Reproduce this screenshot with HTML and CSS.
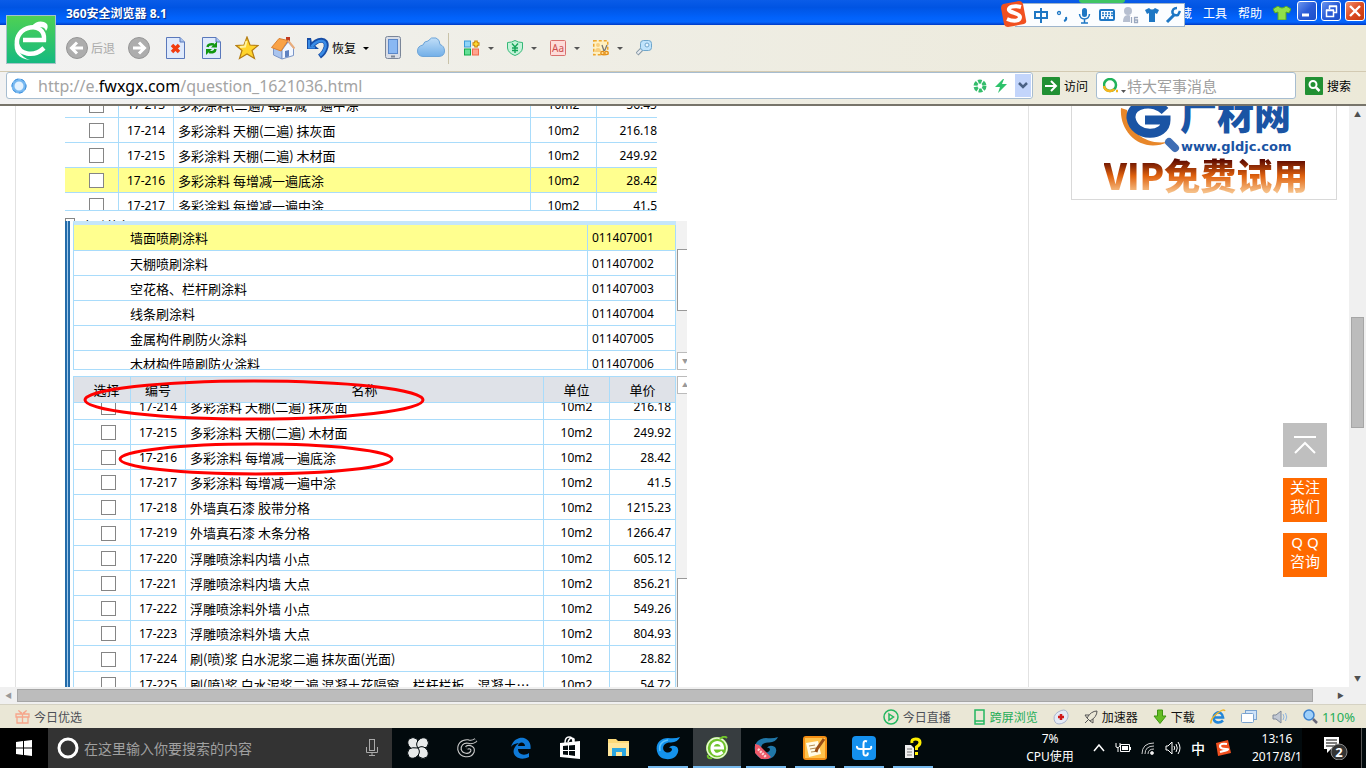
FILE: index.html
```html
<!DOCTYPE html>
<html lang="zh-CN">
<head>
<meta charset="utf-8">
<title>360安全浏览器 8.1</title>
<link rel="stylesheet" href="styles.css">
</head>
<body>
<header class="titlebar">
  <div class="app-logo">
    <svg width="50" height="50" viewBox="0 0 50 50"><defs><linearGradient id="lg" x1="0" y1="0" x2="0" y2="1"><stop offset="0" stop-color="#4fd153"/><stop offset="1" stop-color="#14b981"/></linearGradient></defs><rect x=".5" y=".5" width="49" height="48" fill="url(#lg)" stroke="#a5c4c8"/><path d="M17 25H38C39 15 31 11 24 12.500C15 14 10 22 11 29C13 39 27 43 38 33" fill="none" stroke="#fff" stroke-width="4.500"/><path d="M25 12C30 6 36 5 41 9C42 11 42 13 40 16C39 12 35 11 31 14ZM9 27C7 36 12 44 24 45C14 42 12 35 12 27Z" fill="#fff"/></svg>
  </div>
  <h1 class="title">360安全浏览器 8.1</h1>
  <nav class="menu">
    <a href="#">收藏</a><a href="#">工具</a><a href="#">帮助</a>
    <svg width="18" height="14" viewBox="0 0 18 14"><path d="M0 3L5 0Q9 4 13 0L18 3L16 7L13 6V14H5V6L2 7Z" fill="#8fe04a" stroke="#54a827"/></svg>
  </nav>
  <div class="winbtns">
    <button aria-label="最小化"><svg width="18" height="18"><path d="M4 13H11" stroke="#fff" stroke-width="3"/></svg></button>
    <button aria-label="还原"><svg width="18" height="18" fill="none" stroke="#fff"><path d="M7.500 7V4.500H14.500V10.500H12M7 4H15M4.500 8.500H11.500V14.500H4.500ZM4 8H12" stroke-width="1.500"/></svg></button>
    <button class="close" aria-label="关闭"><svg width="18" height="18"><path d="M4 4L14 14M14 4L4 14" stroke="#fff" stroke-width="2.400"/></svg></button>
  </div>
  <div class="ime">
    <i class="ime-ball"></i>
    <svg class="sogou" width="28" height="28" viewBox="0 0 28 28"><path d="M3 4Q1 5 1 8L4 24Q5 27 8 27L24 24Q27 23 26 20L23 4Q22 1 19 1Z" fill="#f1501f"/><path d="M21 7C14 5 8 7 9 10S20 13 20 17S14 22 7 19" fill="none" stroke="#fff" stroke-width="4"/></svg>
    <svg width="150" height="20" viewBox="0 0 150 20" fill="none" stroke="#1e77c4" stroke-width="2"><path d="M1 7H13V13H1ZM7 3V18"/><circle cx="25" cy="8" r="1.500" stroke-width="1.300"/><path d="M32 12Q33 15 30 16"/><rect x="48" y="3" width="5" height="9" rx="2.500" fill="#1e77c4" stroke="none"/><path d="M45.500 9Q46 14 50.500 14T55.500 9M50.500 14V18M47 18H54" stroke-width="1.500"/><rect x="66" y="5" width="14" height="10" rx="1"/><path d="M68 8H79M68 10.500H79M70 13H76" stroke-dasharray="2 1" stroke-width="1.300"/><g fill="#b6bfd0" stroke="none"><circle cx="94" cy="6" r="4"/><path d="M89 17Q89 10 94 10T100 17Z"/></g><path d="M97.500 11V18M104 12.500H100V17.500H104V15H100" stroke="#fff" stroke-width="3"/><path d="M97.500 12V18M104 12.500H100.500V17.500H103.500V15H101" stroke="#9aa8bf" stroke-width="1.300"/><path d="M111 5L115 3Q118 6 121 3L125 5L123 9L121 8V17H115V8L113 9Z" fill="#1e77c4" stroke="none"/><path d="M133 17L140 10" stroke-width="3"/><path d="M143 3Q138 3 138.500 8Q140 11 144 10L146 6" stroke-width="2.500"/></svg>
  </div>
</header>

<div class="toolbar">
  <button class="tool muted"><svg width="24" height="24"><circle cx="12" cy="12" r="10.500" fill="#adadad" stroke="#969696"/><path d="M18 12H7M12 6.500L6.500 12L12 17.500" fill="none" stroke="#fff" stroke-width="3"/></svg>后退</button>
  <button class="tool" aria-label="前进"><svg width="24" height="24"><circle cx="12" cy="12" r="10.500" fill="#adadad" stroke="#969696"/><path d="M6 12H17M12 6.500L17.500 12L12 17.500" fill="none" stroke="#fff" stroke-width="3"/></svg></button>
  <button class="tool" aria-label="停止"><svg width="24" height="24"><path d="M3.500 1.500H17L21.500 6V22.500H3.500Z" fill="#dfeafc" stroke="#5a78bb"/><path d="M17 1.500V6H21.500" fill="#aac4ee" stroke="#5a78bb"/><path d="M9 9L16 16M16 9L9 16" stroke="#f13c11" stroke-width="3.500"/></svg></button>
  <button class="tool" aria-label="刷新"><svg width="24" height="24"><path d="M3.500 1.500H17L21.500 6V22.500H3.500Z" fill="#dfeafc" stroke="#5a78bb"/><path d="M17 1.500V6H21.500" fill="#aac4ee" stroke="#5a78bb"/><path d="M8.500 11Q9 7.500 15 8.500M16.500 13Q16 17 10 16" fill="none" stroke="#11960f" stroke-width="2.500"/><path d="M18 5.500V11.500H12ZM7 19V13H13Z" fill="#11960f"/></svg></button>
  <button class="tool" aria-label="收藏"><svg width="24" height="24"><path d="M12 1L15 9L23 9.500L17 14.500L19.500 22.500L12 18L4.500 22.500L7 14.500L1 9.500L9 9Z" fill="#ffd42c" stroke="#b47c12" stroke-width="1.200"/><path d="M11.500 5L10 10.500L5 11" stroke="#fff3a0" stroke-width="2" fill="none"/></svg></button>
  <button class="tool" aria-label="主页"><svg width="24" height="24"><path d="M15 1H19V8H15Z" fill="#c23a20"/><path d="M2.500 10L11 14V23L2.500 19Z" fill="#a9c4ee" stroke="#7b96c8"/><path d="M11 14L17 6L22.500 12V19.500L11 23Z" fill="#f2f7ff" stroke="#7b96c8"/><path d="M.5 11.500L8 2.500L17 4.500L10 15Z" fill="#f9a246" stroke="#d98030"/><path d="M17 4.500L23.500 12.500" stroke="#e9ad7c" stroke-width="2"/><path d="M14 15L18 14V20.500L14 21.500Z" fill="#5f82c0"/></svg></button>
  <button class="tool undo"><svg width="24" height="24"><path d="M4 11C10 2 21 2 19 11Q17.500 17 12.500 20.500" fill="none" stroke="#174da5" stroke-width="5"/><path d="M0 2L4 2L5 7L12 13L0 13Z" fill="#174da5"/><path d="M4.500 10.500C11 3 20 3 18.500 11Q17 16.500 13 19.500" fill="none" stroke="#3a8ce6" stroke-width="2.500"/><path d="M2 4V11.500H8" fill="none" stroke="#3a8ce6" stroke-width="2"/></svg><span>恢复</span><i class="caret dark"></i></button>
  <button class="tool" aria-label="手机"><svg width="24" height="24"><rect x="4.500" y=".5" width="15" height="22" rx="2" fill="#d9dde6" stroke="#7b8699"/><rect x="7.500" y="3.500" width="9" height="14" fill="#8ab8f3" stroke="#5b87c8"/><path d="M10 20.500H14" stroke="#7d8796" stroke-width="2"/></svg></button>
  <button class="tool" aria-label="云"><svg width="28" height="24"><defs><linearGradient id="cl" x1="0" y1="0" x2="0" y2="1"><stop offset="0" stop-color="#c2dff8"/><stop offset="1" stop-color="#72afe8"/></linearGradient></defs><path d="M6 20.500Q.5 20 .5 15T6 9Q7 5 11 5Q14 .5 19 2Q23 3.500 23 8.500Q27.500 10 27.500 15T22 20.500Z" fill="url(#cl)" stroke="#6ea5d8"/></svg></button>
  <i class="sep"></i>
  <button class="tool small" aria-label="应用"><svg width="16" height="16"><rect x=".5" y="1" width="6" height="6" fill="#8fd4f8" stroke="#3a9ad9"/><rect x=".5" y="9" width="6" height="6" fill="#65df96" stroke="#11a94b"/><rect x="8.500" y="9" width="6" height="6" fill="#ffa48f" stroke="#f06a4d"/><path d="M12 .5V7.500M8.500 4H15.500" stroke="#c98300" stroke-width="3.500"/><path d="M12 1.500V6.500M9.500 4H14.500" stroke="#ffdd36" stroke-width="1.500"/></svg><i class="caret"></i></button>
  <button class="tool small" aria-label="网银"><svg width="16" height="16" fill="none" stroke="#35b877"><path d="M8 .5Q11 2.500 15.500 2.500V8Q15 13 8 15.500Q1 13 .5 8V2.500Q5 2.500 8 .5Z" fill="#c4f3d9"/><path d="M5 3.500L8 7L11 3.500M8 7V13M5 8H11M5 10.500H11" stroke="#13a558" stroke-width="1.400"/></svg><i class="caret"></i></button>
  <button class="tool small"><svg width="16" height="16"><rect x=".5" y=".5" width="15" height="15" rx="1" fill="#fddcd9" stroke="#d9706d"/><text x="2" y="12" font-size="10" fill="#cc4e4e">Aa</text></svg><i class="caret"></i></button>
  <button class="tool small" aria-label="截图"><svg width="16" height="16"><rect x=".75" y=".75" width="14" height="14" fill="#fff0c0" stroke="#eda62d" stroke-width="1.500" stroke-dasharray="3 2"/><circle cx="5" cy="5" r="2" fill="#f8cf80"/><path d="M2 12Q2 8 5 8T8 12Z" fill="#f8cf80"/><path d="M9 5L11 11M14 5L11.500 11" stroke="#777" stroke-width="1.300"/><circle cx="9.500" cy="13" r="1.700" fill="#ffe0a0" stroke="#e38f18" stroke-width="1.300"/><circle cx="13.500" cy="13" r="1.700" fill="#ffe0a0" stroke="#e38f18" stroke-width="1.300"/></svg><i class="caret"></i></button>
  <button class="tool small" aria-label="登录管家"><svg width="16" height="16"><path d="M6 9L1 14" stroke="#8798a5" stroke-width="4"/><path d="M6 9L1.500 13.500" stroke="#e9edf0" stroke-width="2"/><rect x="4.500" y=".5" width="11" height="10" rx="3" fill="#bfe3fb" stroke="#6fa6cb"/><circle cx="11" cy="5" r="2" fill="#e9f6ff" stroke="#6fa6cb"/></svg></button>
</div>

<div class="addressbar">
  <div class="field url">
    <svg width="16" height="16"><circle cx="8" cy="8" r="6" fill="#e3f2ff" stroke="#77b8f0" stroke-width="3"/><circle cx="8" cy="8" r="7" fill="none" stroke="#3d8fdc" stroke-dasharray="4 3"/></svg>
    <div class="url-text" contenteditable="true" role="textbox" aria-label="地址" spellcheck="false">http://e.<b>fwxgx.com</b>/question_1621036.html</div>
    <svg width="14" height="14"><circle cx="7" cy="7" r="4.500" fill="none" stroke="#34bd6b" stroke-width="4" stroke-dasharray="3.500 1.200"/></svg>
    <svg width="14" height="14"><path d="M9 0L1 8H6L4 14L13 5H8L10 0Z" fill="#2dc26b"/></svg>
    <button class="drop" aria-label="展开"><svg width="10" height="8"><path d="M1 1L5 5L9 1" fill="none" stroke="#4a6184" stroke-width="2.500"/></svg></button>
  </div>
  <button class="go"><svg width="18" height="18"><rect width="18" height="18" rx="1" fill="#219033"/><path d="M3 9H14M9 4L14 9L9 14" fill="none" stroke="#fff" stroke-width="2"/></svg>访问</button>
  <div class="field search">
    <svg width="24" height="16"><circle cx="7" cy="7" r="6" fill="none" stroke="#21b25b" stroke-width="2.500"/><path d="M1 8Q2 13 7 13Q10 13 11 11M13 13H15" fill="none" stroke="#f7b51d" stroke-width="2.500"/><path d="M18 12H23L20.500 15Z" fill="#555"/></svg>
    <input type="text" placeholder="特大军事消息" aria-label="搜索">
  </div>
  <button class="go"><svg width="18" height="18"><rect width="18" height="18" rx="1" fill="#219033"/><circle cx="8" cy="7.500" r="3.500" fill="none" stroke="#fff" stroke-width="2"/><path d="M11 10.500L14.500 14" stroke="#fff" stroke-width="2.500"/></svg>搜索</button>
</div>

<div class="viewport">
  <main class="page">
    <article class="article">
      <div class="shot shot-a">
        <table class="grid">
          <colgroup><col class="a1"><col class="c2"><col class="c3"><col class="c4"><col class="a5"></colgroup>
          <tr><td><input type="checkbox" aria-label="17-213"></td><td>17-213</td><td>多彩涂料(二遍) 每增减一遍中涂</td><td>10m2</td><td>56.45</td></tr>
          <tr><td><input type="checkbox" aria-label="17-214"></td><td>17-214</td><td>多彩涂料 天棚(二遍) 抹灰面</td><td>10m2</td><td>216.18</td></tr>
          <tr><td><input type="checkbox" aria-label="17-215"></td><td>17-215</td><td>多彩涂料 天棚(二遍) 木材面</td><td>10m2</td><td>249.92</td></tr>
          <tr class="on"><td><input type="checkbox" aria-label="17-216"></td><td>17-216</td><td>多彩涂料 每增减一遍底涂</td><td>10m2</td><td>28.42</td></tr>
          <tr><td><input type="checkbox" aria-label="17-217"></td><td>17-217</td><td>多彩涂料 每增减一遍中涂</td><td>10m2</td><td>41.5</td></tr>
        </table>
      </div>
      <div class="wrapline"><label><input type="checkbox">自动换行</label></div>
      <div class="shot shot-b">
        <i class="rail"></i>
        <div class="panes">
          <div class="pane">
            <div class="clip list">
              <table class="grid">
                <colgroup><col><col class="code"></colgroup>
                <tr class="on"><td>墙面喷刷涂料</td><td>011407001</td></tr>
                <tr><td>天棚喷刷涂料</td><td>011407002</td></tr>
                <tr><td>空花格、栏杆刷涂料</td><td>011407003</td></tr>
                <tr><td>线条刷涂料</td><td>011407004</td></tr>
                <tr><td>金属构件刷防火涂料</td><td>011407005</td></tr>
                <tr><td>木材构件喷刷防火涂料</td><td>011407006</td></tr>
              </table>
            </div>
            <div class="minibar"><i class="thumb top"></i><i class="arrow">▼</i></div>
          </div>
          <div class="pane">
            <div class="clip">
              <table class="grid head">
                <colgroup><col class="b1"><col class="c2"><col class="c3"><col class="c4"><col class="c4"></colgroup>
                <tr><th>选择</th><th>编号</th><th>名称</th><th>单位</th><th>单价</th></tr>
              </table>
              <div class="rows">
              <table class="grid">
                <colgroup><col class="b1"><col class="c2"><col class="c3"><col class="c4"><col class="c4"></colgroup>
                <tr><td><input type="checkbox" aria-label="17-214"></td><td>17-214</td><td>多彩涂料 天棚(二遍) 抹灰面</td><td>10m2</td><td>216.18</td></tr>
                <tr><td><input type="checkbox" aria-label="17-215"></td><td>17-215</td><td>多彩涂料 天棚(二遍) 木材面</td><td>10m2</td><td>249.92</td></tr>
                <tr><td><input type="checkbox" aria-label="17-216"></td><td>17-216</td><td>多彩涂料 每增减一遍底涂</td><td>10m2</td><td>28.42</td></tr>
                <tr><td><input type="checkbox" aria-label="17-217"></td><td>17-217</td><td>多彩涂料 每增减一遍中涂</td><td>10m2</td><td>41.5</td></tr>
                <tr><td><input type="checkbox" aria-label="17-218"></td><td>17-218</td><td>外墙真石漆 胶带分格</td><td>10m2</td><td>1215.23</td></tr>
                <tr><td><input type="checkbox" aria-label="17-219"></td><td>17-219</td><td>外墙真石漆 木条分格</td><td>10m2</td><td>1266.47</td></tr>
                <tr><td><input type="checkbox" aria-label="17-220"></td><td>17-220</td><td>浮雕喷涂料内墙 小点</td><td>10m2</td><td>605.12</td></tr>
                <tr><td><input type="checkbox" aria-label="17-221"></td><td>17-221</td><td>浮雕喷涂料内墙 大点</td><td>10m2</td><td>856.21</td></tr>
                <tr><td><input type="checkbox" aria-label="17-222"></td><td>17-222</td><td>浮雕喷涂料外墙 小点</td><td>10m2</td><td>549.26</td></tr>
                <tr><td><input type="checkbox" aria-label="17-223"></td><td>17-223</td><td>浮雕喷涂料外墙 大点</td><td>10m2</td><td>804.93</td></tr>
                <tr><td><input type="checkbox" aria-label="17-224"></td><td>17-224</td><td>刷(喷)浆 白水泥浆二遍 抹灰面(光面)</td><td>10m2</td><td>28.82</td></tr>
                <tr><td><input type="checkbox" aria-label="17-225"></td><td>17-225</td><td>刷(喷)浆 白水泥浆二遍 混凝土花隔窗、栏杆栏板、混凝土…</td><td>10m2</td><td>54.72</td></tr>
              </table>
              </div>
            </div>
            <div class="minibar"><i class="arrow">▲</i><i class="thumb rest"></i></div>
          </div>
        </div>
        <svg class="marks" width="370" height="110" fill="none" stroke="#f00" stroke-width="3"><ellipse cx="189" cy="29" rx="169" ry="19"/><ellipse cx="191" cy="88" rx="136" ry="15"/></svg>
      </div>
    </article>
    <aside class="side">
      <a class="ad" href="#">
        <svg width="180" height="60" viewBox="0 0 180 60"><path d="M1 2C-1 27 22 48 48 36C25 39 10 27 7 4Z" fill="#e8872a"/><path d="M45 5C34-7 10-3 11 12C14 32 46 32 46 14H25" fill="none" stroke="#1a54a4" stroke-width="9"/><path d="M49 36L55 42" stroke="#3e6db4" stroke-width="8" stroke-linecap="round"/><text x="60" y="24" class="brand">广材网</text><text x="61" y="45" class="site">www.gldjc.com</text></svg>
        <strong>VIP免费试用</strong>
      </a>
    </aside>
    <div class="float">
      <button class="up" aria-label="返回顶部"><svg width="24" height="20" fill="none" stroke="#fff" stroke-width="2"><path d="M1 2H23M2 18L12 8L22 18"/></svg></button>
      <button>关注<br>我们</button>
      <button>Q Q<br>咨询</button>
    </div>
  </main>
  <div class="vscroll"><i class="tri">▲</i><i class="s1"></i><i class="bar"></i><i class="s2"></i><i class="tri">▼</i></div>
</div>
<div class="hscroll"><i class="tri pale">◀</i><i class="bar"></i><i class="s"></i><i class="tri">▶</i></div>

<footer class="status">
  <a href="#" class="gift"><svg width="15" height="14" fill="none" stroke="#f6a58a" stroke-width="1.300"><path d="M1 4H14V7H1ZM2 7V13H13V7M7.500 4V13M7 4Q3 0 4 1T7 3M8 4Q12 0 11 1T8 3"/></svg>今日优选</a>
  <span class="grow"></span>
  <a href="#"><svg width="16" height="16" fill="none" stroke="#24b760" stroke-width="1.500"><circle cx="8" cy="8" r="7"/><path d="M6 5L10.500 8L6 11Z"/></svg>今日直播</a>
  <a href="#" class="green"><svg width="12" height="16" fill="none" stroke="#24b760" stroke-width="1.500"><rect x="1" y="1" width="9" height="14"/><path d="M1 12H10"/></svg>跨屏浏览</a>
  <a href="#" aria-label="医生"><svg width="16" height="16"><path d="M2 13Q-1 7 5 3Q12-1 14 3Q17 8 12 13Q5 17 2 13Z" fill="#e4eaf5" stroke="#aab5cd"/><path d="M8 5V11M5 8H11" stroke="#d01818" stroke-width="2.500"/></svg></a>
  <a href="#" class="black"><svg width="14" height="14" fill="none" stroke="#555"><path d="M3 8Q7 1 13 1Q13 7 6 11ZM5 5L1 5L3 8M9 9L9 13L6 11M4 10L1 13"/></svg>加速器</a>
  <a href="#" class="black"><svg width="14" height="16"><path d="M4.500 1H9.500V7H13L7 14.500L1 7H4.500Z" fill="#64bd24" stroke="#3e9412"/></svg>下载</a>
  <a href="#" aria-label="IE"><svg width="16" height="16" fill="none"><path d="M4 8.500H13C12.500 4 9 2.500 6.500 4C3 6 2.500 11 6 13Q10 14.500 13 11.500" stroke="#2285d8" stroke-width="2.600"/><path d="M1 14.500Q0 10 7 4.500T15 2" stroke="#efb52a" stroke-width="1.500"/></svg></a>
  <a href="#" aria-label="窗口"><svg width="16" height="14"><rect x="4.500" y=".5" width="11" height="9" fill="#cfe3f8" stroke="#7aa3d0"/><rect x=".5" y="3.500" width="12" height="9" rx="1" fill="#fff" stroke="#7aa3d0"/></svg></a>
  <a href="#" aria-label="声音"><svg width="16" height="14"><path d="M1 5H4L9 1V13L4 9H1Z" fill="#c2c9d4" stroke="#7e8899"/><path d="M11 4Q13 7 11 10M13.500 3Q16 7 13.500 11" fill="none" stroke="#8fb5e0"/></svg></a>
  <a href="#" class="zoom"><svg width="15" height="15"><circle cx="6" cy="6" r="5" fill="#9fd0fa" stroke="#3c81cd" stroke-width="1.500"/><path d="M10 10L14 14" stroke="#667" stroke-width="2.500"/></svg>110%</a>
</footer>

<div class="taskbar">
  <button class="start" aria-label="开始"><svg width="16" height="16" fill="#fff"><path d="M0 2L7 1V7.500H0ZM8 1L16 0V7.500H8ZM0 8.500H7V15L0 14ZM8 8.500H16V16L8 15Z"/></svg></button>
  <label class="cortana"><svg width="22" height="22"><circle cx="11" cy="11" r="9" fill="none" stroke="#fff" stroke-width="3"/></svg><input type="text" placeholder="在这里输入你要搜索的内容"><svg width="12" height="18" fill="none" stroke="#aaa"><rect x="3.500" y=".5" width="5" height="11"/><path d="M.5 8V13.500H11.500V8M6 13.500V17M3 16.500H9"/></svg></label>
  <div class="apps">
    <button aria-label="风扇"><svg width="22" height="22" fill="#e8eaea" stroke="#020a0d"><path d="M11 11Q7 14 3 10.500Q-1 6 2 2Q6-1 10 2Q12 5 11 11Z"/><path d="M11 11Q8 7 11.500 3Q16-1 20 2Q23 6 20 10Q17 12 11 11Z"/><path d="M11 11Q15 8 19 11.500Q23 16 20 20Q16 23 12 20Q10 17 11 11Z"/><path d="M11 11Q14 15 10.500 19Q6 23 2 20Q-1 16 2 12Q5 10 11 11Z"/></svg></button>
    <button aria-label="广联达助手"><svg width="22" height="22" fill="none"><path d="M20 3Q16 6 12 4.500C6 4 3 8 3.500 12.500C5 19 14 20 16.500 14.500C17.500 10.500 13 9 10.500 11" stroke="#ccc" stroke-width="4.500"/><path d="M20 3Q16 6 12 4.500C6 4 3 8 3.500 12.500C5 19 14 20 16.500 14.500C17.500 10.500 13 9 10.500 11" stroke="#020a0d" stroke-width="2.300"/></svg></button>
  </div>
  <div class="apps">
    <button aria-label="Edge"><svg width="22" height="22"><path d="M1 10C3 2 10 0 14 1C20 3 21 8 20.500 12H8C8 18 15 19 19 16V20C9 25 0 18 5 10C7 7 9 6 10 6C3 6 1 10 1 10ZM8 9H15C15 5 9 4 8 9Z" fill="#0f7ad8" fill-rule="evenodd"/></svg></button>
    <button aria-label="商店"><svg width="22" height="24"><path d="M1 7L21 5V23L1 21Z" fill="#fff"/><path d="M6 7Q6 1 10 1T14 6M9 6Q11 0 15 3V6" fill="none" stroke="#fff" stroke-width="1.500"/><path d="M4 10L9 9.500V14H4ZM10 9.500L16 9V14H10ZM4 15H9V19L4 18.500ZM10 15H16V20L10 19Z" fill="#020a0d"/></svg></button>
    <button aria-label="资源管理器"><svg width="22" height="20"><path d="M0 1H8L10 3H21V18H0Z" fill="#fbd979"/><path d="M0 5H21V18H0Z" fill="#ffe69b"/><path d="M4 18V10H18V18H14V14H8V18Z" fill="#2ba6e0"/></svg></button>
    <button class="run" aria-label="广联达"><svg width="24" height="24"><path d="M24 1Q22 6 15 6.500C9 6 6 10 7.500 14C10 18 16 17 16 13Q15.500 11.500 13 11.500Q16 8.500 21 11Q24 15 20 20C15 25 5 24 2 18C-2 10 3 2 12 2Q19 3 24 1Z" fill="#1492ec"/><path d="M4 15Q2 6 12 4" fill="none" stroke="#5ec2fb" stroke-width="1.500"/></svg></button>
    <button class="run active" aria-label="360浏览器"><svg width="24" height="24"><circle cx="12" cy="12" r="11" fill="#6fc32b"/><path d="M7 12H17.500C17.500 7 13 5.500 10 7C6 9 6 15 9.500 17.500Q13.500 19.500 17.500 16" fill="none" stroke="#fff" stroke-width="3"/><circle cx="12" cy="12" r="10" fill="none" stroke="#e8f7d5" stroke-width="1.500"/><path d="M15 3Q19-1 22 2M3 19Q2 23 7 22" fill="none" stroke="#6fc32b" stroke-width="2"/></svg></button>
    <button class="run" aria-label="广联达新闻"><svg width="24" height="24"><path d="M24 1Q22 6 15 6.500C9 6 6 10 7.500 14C10 18 16 17 16 13Q15.500 11.500 13 11.500Q16 8.500 21 11Q24 15 20 20C15 25 5 24 2 18C-2 10 3 2 12 2Q19 3 24 1Z" fill="#2077a8"/><path d="M1 8L5 9L17 21L14 23H7L1 17Z" fill="#ee5868"/><path d="M4 13L12 21" stroke="#ffd5d5" stroke-dasharray="2 1" stroke-width="2.500"/></svg></button>
    <button class="run" aria-label="便笺"><svg width="24" height="24"><rect width="24" height="24" rx="3" fill="#f38e14"/><rect x="2" y="2" width="20" height="20" fill="#ffc34c"/><path d="M3 7L15 5L18 18L6 21Z" fill="#fffbe6"/><path d="M6 10L12 9M7 13L13 12M8 16L12 15.500" stroke="#b28b52"/><path d="M21 3L14 13L13 16" stroke="#9a4e16" stroke-width="3" fill="none"/></svg></button>
    <button class="run" aria-label="工具"><svg width="24" height="24"><rect width="24" height="24" rx="4" fill="#1490ee"/><path d="M11.500 17V8Q11.500 4 15 5.500M5 10Q4.500 13 8 13H17Q20 13 19 10M11.500 17Q11.500 20 14 19.500Q16.500 19 15.500 16.500" fill="none" stroke="#fff" stroke-width="2"/></svg></button>
    <button class="run" aria-label="帮助"><svg width="22" height="24"><path d="M3 9H9L12 12V22H3Z" fill="#eee"/><path d="M5 13H10M5 16H10M5 19H10" stroke="#777"/><path d="M10 7Q9 3 13.500 3T18 6.500Q18 9 14.500 11V14M14.500 16V19" fill="none" stroke="#ffef00" stroke-width="3"/></svg></button>
  </div>
  <span class="grow"></span>
  <div class="cpu">7%<br>CPU使用</div>
  <div class="tray">
    <svg width="12" height="8" fill="none" stroke="#fff" stroke-width="1.500"><path d="M1 7L6 1L11 7"/></svg>
    <svg width="16" height="12" fill="none" stroke="#fff"><path d="M5.500 2.500H14.500V9.500H5.500ZM15.500 5V8M1 1V5Q3 7 5 4V1M3 6V10" /><path d="M7 6H13" stroke-width="4"/></svg>
    <svg width="14" height="14" fill="none" stroke="#ccc"><path d="M1 13Q1 2 13 2M4 13Q4 5 13 5M7 13Q7 8 13 8"/><circle cx="11" cy="12" r="1.500" fill="#fff"/></svg>
    <svg width="16" height="14" fill="none" stroke="#fff"><path d="M1 5H3L7 1V13L3 9H1ZM9 5Q10.500 7 9 9M11 3Q13.500 7 11 11M13 1Q17 7 13 13"/></svg>
    <b>中</b>
    <svg width="16" height="16"><path d="M1 3L13 0L16 13L3 16Z" fill="#f1501f"/><path d="M12 4Q5 3 5 6T11 9T5 12" fill="none" stroke="#fff" stroke-width="2.200"/></svg>
  </div>
  <div class="clock">13:16<br>2017/8/1</div>
  <button class="note" aria-label="通知"><svg width="26" height="24"><path d="M1 1H16V13H8L4 17V13H1Z" fill="#fff"/><path d="M3 4H14M3 7H14M3 10H14" stroke="#000"/><circle cx="16" cy="16" r="8" fill="#333" stroke="#888"/><text x="16" y="21" text-anchor="middle" fill="#fff" font-size="13" font-weight="700">2</text></svg></button>
</div>
</body>
</html>
```
FILE: styles.css
```css
* { box-sizing: border-box; }
html, body { height: 100%; }
body {
  margin: 0;
  display: flex;
  flex-direction: column;
  overflow: hidden;
  font: 12px "Noto Sans", "Noto Sans CJK SC", sans-serif;
  color: #000;
  background: #fff;
}
button { padding: 0; border: 0; background: none; font: inherit; color: inherit; }
a { color: inherit; text-decoration: none; }
i { font-style: normal; }
svg { display: block; flex: none; }
.grow { flex: 1; }

.titlebar {
  position: relative;
  flex: none;
  height: 25px;
  display: flex;
  align-items: center;
  padding: 0 1px 0 66px;
  color: #fff;
  background: linear-gradient(#0a5ce8, #0054e3 30%, #0162fb 70%, #0566fd 88%, #0039c4);
}
.app-logo { position: absolute; left: 6px; top: 15px; z-index: 2; }
.title { flex: 1; margin: 0; font-size: 12px; text-shadow: 1px 1px 1px #0a2c80; }
.menu { display: flex; align-items: center; gap: 11px; margin-right: 6px; }
.winbtns { display: flex; gap: 4px; align-self: flex-start; padding-top: 1px; }
.winbtns button {
  width: 20px;
  height: 20px;
  border: 1px solid #fff;
  border-radius: 3px;
  background: linear-gradient(135deg, #6b95ef, #2a5bd7 50%, #1c4fc9);
}
.winbtns .close { background: linear-gradient(135deg, #f0906f, #dc4b22 50%, #c5380f); }
.ime {
  position: absolute;
  right: 181px;
  top: 3px;
  z-index: 3;
  width: 170px;
  height: 24px;
  display: flex;
  align-items: center;
  padding-left: 19px;
  background: #fbfdff;
  border: 1px solid #9db4cc;
  border-left: 0;
}
.sogou { position: absolute; left: -15px; top: -4px; }
.ime-ball { position: absolute; left: 64px; top: -4px; width: 46px; height: 3px; border-radius: 0 0 20px 20px; background: #3fc463; }

.toolbar {
  flex: none;
  height: 47px;
  display: flex;
  align-items: center;
  gap: 12px;
  padding-left: 65px;
  background: linear-gradient(90deg, #f2f2f2, #efeee6 40%, #ece9d8);
  border-bottom: 1px solid #d3cab2;
}
.tool { display: flex; align-items: center; gap: 2px; }
.muted { color: #aaa; }
.undo { gap: 1px; }
.undo .caret { margin-left: 6px; }
.caret { border: 3px solid transparent; border-top: 3px solid #555; border-bottom: 0; }
.caret.dark { border-top-color: #000; }
.sep { width: 1px; height: 31px; margin: 0 3px 0 -9px; background: #c9c2a8; }
.small { gap: 8px; margin-right: 1px; }

.addressbar {
  flex: none;
  height: 34px;
  display: flex;
  align-items: center;
  padding: 0 15px 5px 6px;
  background: linear-gradient(90deg, #f2f2f2, #efeee6 40%, #ece9d8);
  border-bottom: 2px solid #77746a;
}
.field {
  height: 27px;
  display: flex;
  align-items: center;
  background: #fff;
  border: 1px solid #a7bdd0;
  border-radius: 3px;
}
.url { flex: 1; padding: 0 1px 0 4px; gap: 7px; }
.url-text { flex: 1; margin-left: 4px; font-size: 16px; line-height: 24px; color: #a4a4a4; outline: 0; white-space: nowrap; }
.url-text b { font-weight: 400; color: #000; }
.drop { width: 16px; height: 23px; display: flex; align-items: center; justify-content: center; background: #c3d5fb; }
.go { display: flex; align-items: center; gap: 4px; margin-left: 9px; }
.search { width: 200px; margin-left: 8px; padding-left: 6px; }
.search input { flex: 1; min-width: 0; border: 0; padding: 0; outline: 0; background: none; font: 15px/22px "Noto Sans CJK SC", sans-serif; }
.search input::placeholder { color: #a0a0a0; }

.viewport { flex: 1; min-height: 0; display: flex; }
.page { position: relative; flex: 1; min-width: 0; display: flex; overflow: hidden; padding-left: 15px; }
.article { flex: 1; min-width: 0; padding-left: 49px; border: solid #e2e2e2; border-width: 0 1px; }
.shot-a { width: 592px; height: 105px; overflow: hidden; border-bottom: 1px solid #a9dcfb; }
.shot-a .grid { margin-top: -14px; }
.grid { width: 100%; table-layout: fixed; border-collapse: separate; border-spacing: 0; line-height: 18px; }
.grid tr { height: 25px; }
.grid tr:nth-child(5n+1) { height: 26px; }
.grid td, .grid th { padding: 1px 4px 0; border: solid #a9dcfb; border-width: 0 1px 1px 0; text-align: center; font-weight: 400; white-space: nowrap; overflow: hidden; }
.grid td:nth-child(3) { text-align: left; font: 13px/18px "Noto Sans CJK SC", sans-serif; }
.grid td:nth-child(5) { text-align: right; }
.shot-a td:nth-child(5) { padding-right: 0; border-right: 0; }
.on { background: #ffff8f; }
.grid input, .wrapline input {
  appearance: none;
  display: block;
  width: 15px;
  height: 15px;
  margin: 0 auto;
  background: #fff;
  border: 1px solid #858585;
}
.shot-a td:first-child, .head th:first-child { padding-left: 13px; }
.rows td:first-child { padding-left: 16px; }
.a1 { width: 54px; }
.a5 { width: 60px; }
.b1 { width: 57px; }
.c2 { width: 55px; }
.c3 { width: auto; }
.c4 { width: 66px; }
.code { width: 88px; }
.wrapline { height: 10px; padding-top: 6px; overflow: hidden; font-size: 13px; line-height: 18px; }
.wrapline label { display: flex; gap: 6px; }
.wrapline input { margin: 1px 0 0; width: 10px; }

.shot-b { position: relative; width: 622px; display: flex; }
.rail { width: 5px; margin-right: 3px; background: #9cc9ee; border: solid #236ba9; border-width: 0 2px; }
.panes { flex: 1; min-width: 0; display: flex; flex-direction: column; gap: 6px; }
.pane { display: flex; }
.clip { flex: 1; min-width: 0; border: solid #a9dcfb; border-width: 1px 0 0 1px; }
.list { height: 149px; border-top: 4px solid #c5e6fa; border-bottom: 1px solid #a9dcfb; overflow: hidden; }
.list td { text-align: left; }
.list td:first-child { padding-left: 56px; font: 13px/18px "Noto Sans CJK SC", sans-serif; }
.head { background: #dfe2e8; font-size: 13px; }
.rows { overflow: hidden; }
.rows .grid { margin-top: -9px; }
.minibar { width: 11px; display: flex; flex-direction: column; background: #f2f2f2; }
.thumb { background: #fff; border: 1px solid #999; border-right: 0; margin-left: 1px; }
.thumb.top { height: 62px; margin-top: 28px; margin-bottom: auto; }
.thumb.rest { flex: 1; margin-top: 184px; }
.arrow { height: 18px; margin-left: 1px; overflow: hidden; background: #fff; border: 1px solid #bbb; border-right: 0; color: #999; font-size: 6px; line-height: 16px; padding-left: 4px; }
.marks { position: absolute; left: 0; top: 150px; }

.side { width: 266px; margin: 0 12px 0 42px; flex: none; }
.ad { display: flex; flex-direction: column; align-items: center; height: 94px; border: 1px solid #d9d9d9; border-top: 0; }
.ad svg { margin-left: 11px; }
.brand { font: 900 37px "Noto Sans CJK SC", sans-serif; fill: #1a54a4; }
.site { font: 700 13px "DejaVu Sans", sans-serif; fill: #1a54a4; }
.ad strong {
  margin-top: -12px;
  margin-left: 4px;
  font: 900 36px/40px "Noto Sans CJK SC", sans-serif;
  color: transparent;
  background: linear-gradient(#5c0a00 15%, #e0620e 55%, #f6c088 95%);
  background-clip: text;
  -webkit-background-clip: text;
}
.float { position: absolute; right: 22px; top: 317px; display: flex; flex-direction: column; gap: 11px; }
.float button { width: 44px; height: 44px; padding-bottom: 6px; background: #ff6a00; color: #fff; font-size: 15px; line-height: 19px; }
.float .up { display: flex; align-items: center; justify-content: center; padding: 0; background: #bfbfbf; }

.vscroll, .hscroll { flex: none; display: flex; background: #f0f0f0; }
.vscroll { width: 17px; flex-direction: column; }
.hscroll { height: 17px; padding-right: 17px; }
.bar { background: #bcbcbc; border: 1px solid #a6a6a6; }
.vscroll .bar { flex: 110; margin: 0 2px; }
.s1 { flex: 194; }
.s2 { flex: 242; }
.hscroll .bar { flex: 1296; margin: 2px 0; }
.s { flex: 19; }
.tri { flex: none; width: 17px; height: 17px; font-size: 7px; line-height: 17px; text-align: center; color: #505050; }
.pale { color: #999; }

.status {
  flex: none;
  height: 24px;
  display: flex;
  align-items: center;
  gap: 15px;
  padding: 0 11px 0 15px;
  background: #eae7d6;
  border-top: 1px solid #d5d2c3;
  color: #4d5057;
}
.status a { display: flex; align-items: center; gap: 4px; }
.status a:nth-of-type(2) { margin-right: 8px; }
.status .green, .status .zoom { color: #24ad57; }
.status .zoom { font-size: 13px; }
.status .black { color: #111; }

.taskbar { flex: none; height: 40px; display: flex; align-items: stretch; background: #020a0d; color: #fff; }
.start { width: 48px; display: flex; align-items: center; justify-content: center; background: #000; }
.cortana { width: 344px; display: flex; align-items: center; padding: 0 14px 0 9px; background: #333; }
.cortana input { flex: 1; min-width: 0; margin-left: 5px; padding: 0; border: 0; outline: 0; background: none; color: #fff; font: 14px "Noto Sans CJK SC", sans-serif; }
.cortana input::placeholder { color: #a0a0a0; }
.apps { display: flex; gap: 1px; margin-left: 2px; }
.apps + .apps { margin-left: 6px; }
.apps button { width: 48px; display: flex; align-items: center; justify-content: center; }
.run { background: linear-gradient(#76b9ed, #76b9ed) center bottom / 40px 2px no-repeat; }
.apps .active { background: linear-gradient(#76b9ed, #76b9ed) center bottom / 48px 2px no-repeat #373d40; }
.cpu, .clock { text-align: center; line-height: 18px; padding-top: 2px; }
.tray { display: flex; align-items: center; gap: 10px; margin: 0 21px 0 19px; }
.tray b { font-size: 14px; font-weight: 500; }
.note { display: flex; align-items: center; justify-content: center; width: 60px; padding-left: 8px; background: #000; border-right: 1px solid #555; margin-right: 4px; }
```
